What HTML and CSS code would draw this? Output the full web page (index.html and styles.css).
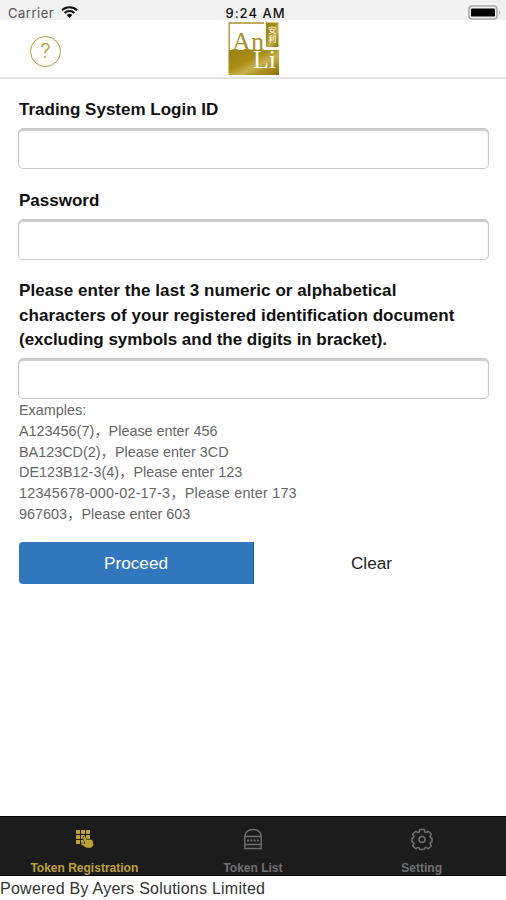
FILE: index.html
```html
<!DOCTYPE html>
<html lang="en">
<head>
    <meta charset="UTF-8">
    <title>Token Registration</title>
    <link rel="stylesheet" href="styles.css">
</head>
<body>
    <div class="status">
        <div class="carrier">
            <span>Carrier</span>
            <svg width="17" height="12" viewBox="0 0 17 12">
                <path d="M1 4.3a10.8 10.8 0 0 1 15 0M3.6 7a7 7 0 0 1 9.8 0" fill="none" stroke="#111" stroke-width="2"/>
                <path d="M8.5 12 5.6 9.1a4.1 4.1 0 0 1 5.8 0z" fill="#111"/>
            </svg>
        </div>
        <span class="time">9:24 AM</span>
        <svg class="battery" width="34" height="15" viewBox="0 0 34 15">
            <rect x="1" y="1" width="28" height="13" rx="3" fill="#f1f1f1" stroke="#aaa" stroke-width="1.6"/>
            <rect x="3" y="3.5" width="24" height="8" rx="1" fill="#000"/>
            <path d="M31 5.2q2.4 2.3 0 4.6z" fill="#aaa"/>
        </svg>
    </div>
    <div class="header">
        <div class="help">?</div>
        <svg class="logo" width="51" height="54" viewBox="0 0 51 54">
            <defs>
                <linearGradient id="gold" x1="0" y1="0" x2="1" y2="1">
                    <stop offset="0" stop-color="#9c8118"/>
                    <stop offset="0.4" stop-color="#a98c12"/>
                    <stop offset="0.6" stop-color="#c9b052"/>
                    <stop offset="0.8" stop-color="#a88b16"/>
                    <stop offset="1" stop-color="#8a7010"/>
                </linearGradient>
            </defs>
            <path d="M36 1H1.2v27" fill="none" stroke="#a98f2c" stroke-width="1.3"/>
            <rect x="0.5" y="28" width="50.5" height="25" fill="url(#gold)"/>
            <rect x="38" y="0.5" width="12.5" height="24.5" fill="url(#gold)"/>
            <text class="cjk" x="44.3" y="4">安利</text>
            <text class="an" x="4" y="27.5" textLength="32" lengthAdjust="spacingAndGlyphs">An</text>
            <text class="li" x="25" y="46" textLength="23" lengthAdjust="spacingAndGlyphs">Li</text>
        </svg>
    </div>
    <div class="form">
        <label for="login">Trading System Login ID</label>
        <input id="login" type="text">
        <label for="pwd">Password</label>
        <input id="pwd" type="password">
        <label class="long" for="doc">Please enter the last 3 numeric or alphabetical<br>characters of your registered identification document<br><span>(excluding symbols and the digits in bracket).</span></label>
        <input id="doc" type="text">
        <div class="examples">
            <p>Examples:</p>
            <p>A123456(7)，Please enter 456</p>
            <p>BA123CD(2)，Please enter 3CD</p>
            <p>DE123B12-3(4)，Please enter 123</p>
            <p class="wide">12345678-000-02-17-3，Please enter 173</p>
            <p>967603，Please enter 603</p>
        </div>
        <div class="buttons">
            <button class="proceed">Proceed</button>
            <button class="clear">Clear</button>
        </div>
    </div>
    <div class="tabs">
        <div class="tab selected">
            <svg width="24" height="24" viewBox="0 0 24 24" fill="currentColor">
                <path d="M4 3h4v4H4zM9 3h4v4H9zM14 3h4v4h-4zM4 8h4v4H4zM9 8h4v4H9zM14 8h4v4h-4zM4 13h4v4H4zM9 13h3v4H9z"/>
                <path d="M11.4 9.5q1.2-.8 2 .5l1.5 2.6 3.8-.3q2 .2 2.5 2.2l.3 4-2.2 2.5h-4.500l-5.600-3.200q-.8-1.300.6-1.800l3.200.4-2.200-5q-.2-1.200.6-1.900z" stroke="#1c1c1c" stroke-width=".5"/>
            </svg>
            <span>Token Registration</span>
        </div>
        <div class="tab">
            <svg width="24" height="24" viewBox="0 0 24 24" fill="none" stroke="currentColor" stroke-width="1.4">
                <path d="M3.8 21.5V9.5Q4.5 2.5 12 2.5t8.2 7v12zM4 9.5h16M4 17.5h16"/>
                <path d="M6 13.5h12" stroke-width="2" stroke-dasharray="2 1.3"/>
            </svg>
            <span>Token List</span>
        </div>
        <div class="tab">
            <svg width="24" height="24" viewBox="0 0 24 24" fill="none" stroke="currentColor" stroke-width="1.5" stroke-linejoin="round">
                <path d="M9.8 2.5h4.4l.6 2.5 1.3.6 2.2-1.4 3 3.1-1.3 2.2.5 1.2 1.5.4v3.8l-1.5.4-.5 1.2 1.3 2.2-3 3.1-2.2-1.4-1.3.6-.6 1.5H9.8l-.6-1.5-1.3-.6-2.2 1.4-3-3.1L4 16.5l-.5-1.2-1.5-.4v-3.8l1.5-.4L4 9.5 2.7 7.3l3-3.1 2.200 1.400L9.200 5z"/>
                <circle cx="12" cy="12.5" r="3"/>
            </svg>
            <span>Setting</span>
        </div>
    </div>
    <div class="footer">Powered By Ayers Solutions Limited</div>
</body>
</html>
```
FILE: styles.css
```css
*{
    margin: 0;
    padding: 0;
    box-sizing: border-box;
}
body{
    width: 506px;
    height: 900px;
    display: flex;
    flex-direction: column;
    overflow: hidden;
    background: #fff;
    color: #111;
    font-family: "Liberation Sans", "Noto Sans CJK SC", sans-serif;
}
.status{
    height: 20px;
    padding: 5px 4px 0 8px;
    display: grid;
    grid-template-columns: 1fr auto 1fr;
    background: #f1f1f1;
    font-family: Inter, sans-serif;
    font-size: 13px;
    line-height: 16px;
}
.carrier{
    display: flex;
    gap: 7px;
    color: #555;
    letter-spacing: 0.5px;
}
.carrier svg{
    margin-top: 1px;
}
.time{
    padding-left: 1px;
    font-weight: 500;
    letter-spacing: 1px;
}
.battery{
    justify-self: end;
}
.header{
    height: 59px;
    padding: 2px 30px 0;
    display: grid;
    grid-template-columns: 1fr 51px 1fr;
    border-bottom: 2px solid #e2e2e2;
}
.help{
    width: 31px;
    height: 31px;
    margin-top: 14px;
    border: 1.5px solid #b79d32;
    border-radius: 50%;
    color: #b79d32;
    font-family: Inter, sans-serif;
    font-size: 20px;
    font-weight: 300;
    line-height: 29px;
    text-align: center;
}
.logo .cjk{
    fill: #fff;
    font: 8.5px "Noto Sans CJK SC", sans-serif;
    writing-mode: vertical-rl;
}
.logo .an{
    fill: #a98f2c;
    font: 25px "Liberation Serif", serif;
}
.logo .li{
    fill: #fff;
    font: 25px "Liberation Serif", serif;
}
.form{
    flex: 1;
    padding: 19px 17px 0 18px;
}
.form label{
    display: block;
    margin-bottom: 5.5px;
    padding-left: 1px;
    font-size: 17px;
    font-weight: bold;
    line-height: 24.5px;
}
.form .long{
    letter-spacing: 0.07px;
}
.form .long span{
    letter-spacing: -0.03px;
}
.form input{
    display: block;
    width: 100%;
    height: 41px;
    margin-bottom: 19.5px;
    border: 1px solid #c8c8c8;
    border-radius: 5px;
    box-shadow: inset 0 2px 1px #ccc;
    outline: none;
}
.form #doc{
    margin-bottom: 0;
}
.examples{
    padding: 1px 0 0 1px;
    color: #666;
    font-size: 14.4px;
    line-height: 20.8px;
}
.examples .wide{
    letter-spacing: 0.2px;
}
.buttons{
    margin: 17px 0 0 1px;
    display: grid;
    grid-template-columns: 1fr 1fr;
}
.buttons button{
    height: 42px;
    padding-top: 2px;
    border: none;
    background: #fff;
    color: #222;
    font-family: inherit;
    font-size: 17.2px;
}
.buttons .proceed{
    background: #3276be;
    border-right: 1px solid #1458b0;
    border-radius: 4px 0 0 4px;
    color: #fff;
}
.tabs{
    height: 60px;
    display: grid;
    grid-template-columns: 1fr 1fr 1fr;
    background: #1c1c1c;
    border-top: 1px solid #000;
    border-bottom: 1px solid #000;
}
.tab{
    padding-top: 10px;
    display: flex;
    flex-direction: column;
    align-items: center;
    color: #717171;
    font-size: 12px;
    font-weight: bold;
    line-height: 14px;
}
.tab span{
    margin-top: 10px;
}
.tabs .selected{
    color: #bda136;
}
.footer{
    height: 24px;
    font-size: 16px;
    letter-spacing: 0.25px;
    line-height: 25px;
    color: #333;
}
```
